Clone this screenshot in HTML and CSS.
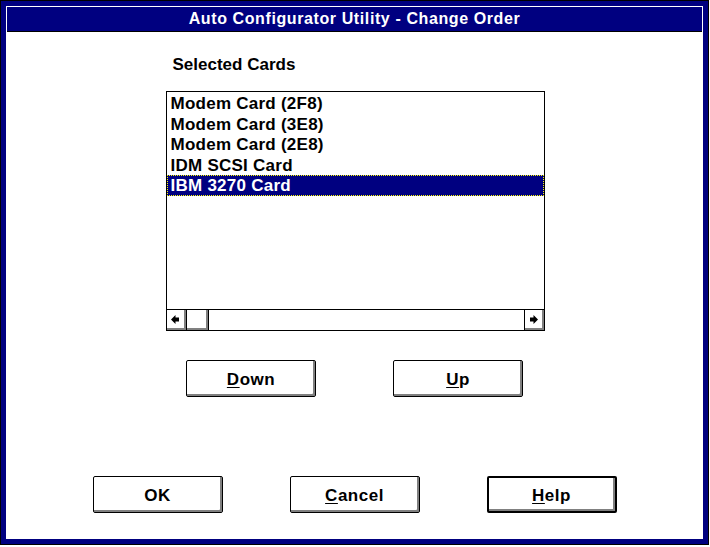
FILE: index.html
```html
<!DOCTYPE html>
<html lang="en">

<head>
    <meta charset="UTF-8">
    <meta name="viewport" content="width=device-width, initial-scale=1.0">
    <title>Auto Configurator Utility - Change Order</title>
    <link rel="stylesheet" href="styles.css">
</head>

<body>
    <div class="window">
        <div class="client">
            <div class="titlebar">Auto Configurator Utility - Change Order</div>

            <div class="list-area">
                <div class="label">Selected Cards</div>
                <div class="listbox">
                    <ul class="items">
                        <li>Modem Card (2F8)</li>
                        <li>Modem Card (3E8)</li>
                        <li>Modem Card (2E8)</li>
                        <li>IDM SCSI Card</li>
                        <li class="selected">IBM 3270 Card</li>
                    </ul>
                    <div class="hscroll">
                        <div class="sb-btn">
                            <svg width="9" height="9" viewBox="0 0 9 9">
                                <path d="M0 4.5 L4.5 0 L4.5 2.5 L8 2.5 L8 6.5 L4.5 6.5 L4.5 9 Z" fill="#000" />
                            </svg>
                        </div>
                        <div class="sb-thumb"></div>
                        <div class="sb-track"></div>
                        <div class="sb-btn sb-right">
                            <svg width="9" height="9" viewBox="0 0 9 9">
                                <path d="M9 4.5 L4.5 0 L4.5 2.5 L1 2.5 L1 6.5 L4.5 6.5 L4.5 9 Z" fill="#000" />
                            </svg>
                        </div>
                    </div>
                </div>
            </div>

            <div class="move-row">
                <button class="btn"><u>D</u>own</button>
                <button class="btn"><u>U</u>p</button>
            </div>

            <div class="action-row">
                <button class="btn">OK</button>
                <button class="btn"><u>C</u>ancel</button>
                <button class="btn btn-default"><u>H</u>elp</button>
            </div>
        </div>
    </div>
</body>

</html>
```

FILE: styles.css
```css
body {
    margin: 0;
    padding: 0;
    background-color: #fff;
    font-family: "Liberation Sans", Arial, sans-serif;
    font-weight: bold;
    font-size: 17px;
    color: #000;
}

.window {
    width: 709px;
    height: 545px;
    box-sizing: border-box;
    border: 1px solid #000;
    padding: 5px;
    background-color: #000080;
}

.client {
    height: 100%;
    background-color: #fff;
    display: flex;
    flex-direction: column;
}

.titlebar {
    margin: 1px 1px 0;
    height: 24px;
    border-bottom: 1px solid #000;
    background-color: #000080;
    color: #fff;
    font-size: 16px;
    line-height: 24px;
    text-align: center;
    letter-spacing: 0.6px;
}

.list-area {
    align-self: center;
    width: 379px;
    margin-top: 23px;
    margin-left: 1px;
}

.label {
    line-height: 20px;
    padding-left: 7px;
    margin-bottom: 16px;
}

.listbox {
    height: 240px;
    box-sizing: border-box;
    border: 1px solid #000;
    display: flex;
    flex-direction: column;
}

.items {
    flex: 1;
    list-style: none;
    margin: 0;
    padding: 1px 0 0;
}

.items li {
    height: 20.5px;
    line-height: 21px;
    padding-left: 4px;
    letter-spacing: 0.25px;
}

.items li.selected {
    background-color: #000080;
    color: #fff;
    outline: 1px dotted #ffff00;
    outline-offset: -1px;
}

/* horizontal scroll bar */
.hscroll {
    height: 21px;
    box-sizing: border-box;
    border-top: 1px solid #000;
    display: flex;
}

.sb-btn,
.sb-thumb {
    width: 20px;
    box-sizing: border-box;
    border-right: 1px solid #000;
    box-shadow: inset -2px -2px 0 #808080;
    display: flex;
    align-items: center;
    justify-content: center;
}

.sb-btn svg {
    margin: 0 1px 1px 0;
}

.sb-thumb {
    width: 22px;
}

.sb-track {
    flex: 1;
}

.sb-right {
    border-right: none;
    border-left: 1px solid #000;
}

/* push buttons */
.btn {
    width: 130px;
    height: 37px;
    box-sizing: border-box;
    border: 1px solid #000;
    border-radius: 2px;
    background-color: #fff;
    box-shadow: inset -2px -2px 0 #808080;
    font-family: inherit;
    font-weight: bold;
    font-size: 17px;
    color: #000;
    padding: 2px 0 0;
    letter-spacing: 0.5px;
}

.btn u {
    text-underline-offset: 2px;
}

.btn-default {
    border-width: 2px;
}

.move-row {
    display: flex;
    justify-content: center;
    gap: 77px;
    margin-top: 29px;
}

.action-row {
    display: flex;
    justify-content: center;
    gap: 67px;
    margin-top: 79px;
}
```
